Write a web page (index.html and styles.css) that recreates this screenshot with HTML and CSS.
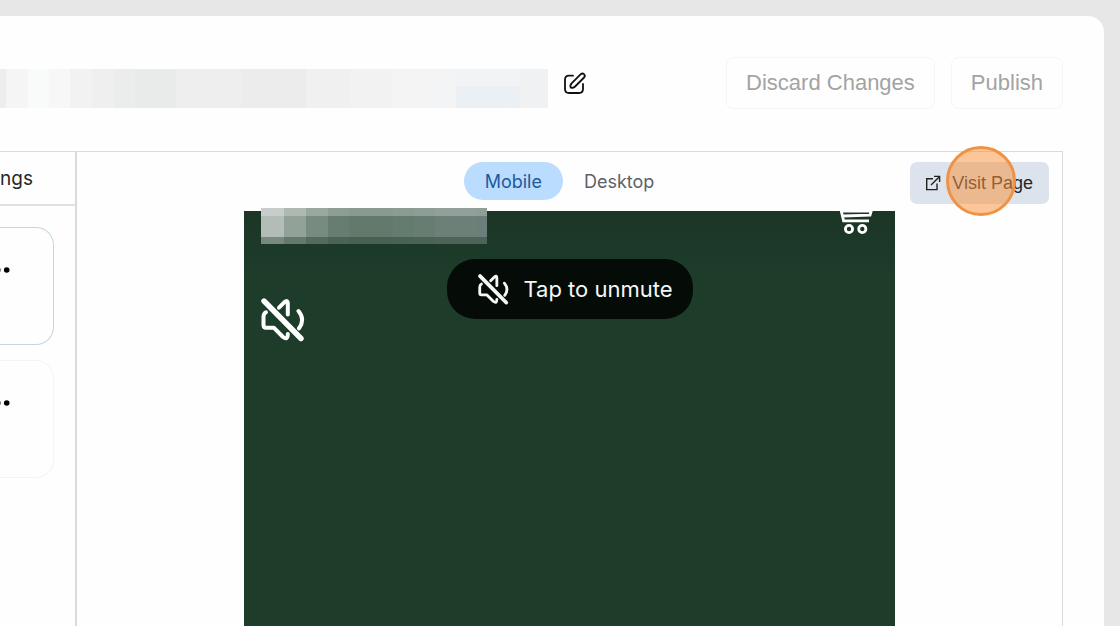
FILE: index.html
```html
<!DOCTYPE html>
<html lang="en">
<head>
  <meta charset="UTF-8">
  <meta name="viewport" content="width=device-width, initial-scale=1.0">
  <title>Page Editor</title>
  <link rel="stylesheet" href="styles.css">
</head>
<body>
  <svg width="0" height="0" class="sprite" aria-hidden="true">
    <symbol id="muted" viewBox="0 0 44 44">
      <g fill="none" stroke="currentColor" stroke-width="4" stroke-linecap="round" stroke-linejoin="round">
        <path d="M5 14.3Q2.5 15.5 2.5 18.7V27Q2.5 29.7 5 29.7H12.8L22 39Q26.8 42.5 26.8 36"/>
        <path d="M18 9.7L23 4.6Q26.8 1.2 26.8 5.5V16.5"/>
        <path d="M37.5 13Q44.5 21.5 38 30.3"/>
        <path d="M3 3L40 40.5" stroke-width="5.4"/>
      </g>
    </symbol>
  </svg>

  <main class="page">
    <header class="header">
      <div class="page-name"></div>
      <button class="icon-btn" aria-label="Edit name">
        <svg width="24" height="24" viewBox="0 0 24 24" fill="none" stroke="#111" stroke-width="1.8" stroke-linecap="round" stroke-linejoin="round">
          <path d="M10 4.7H6Q2 4.7 2 8.7V18Q2 22 6 22H16Q20 22 20 18V13"/>
          <path d="M7.8 16.5Q6.6 14.4 8.8 12.2L17.8 3.2Q19.4 1.8 21 3.1Q22.6 4.8 21.1 6.5L12.1 15.5Q9.8 17.6 7.8 16.5Z"/>
        </svg>
      </button>
      <div class="actions">
        <button class="btn">Discard Changes</button>
        <button class="btn">Publish</button>
      </div>
    </header>

    <div class="workspace">
      <aside class="sidebar">
        <h2>ngs</h2>
        <div class="item active">
          <button class="icon-btn" aria-label="More options">
            <svg width="10" height="6" viewBox="0 0 10 6"><circle cx="-1.2" cy="3" r="2.2" fill="#777"/><circle cx="6.7" cy="3" r="2.8"/></svg>
          </button>
        </div>
        <div class="item">
          <button class="icon-btn" aria-label="More options">
            <svg width="10" height="6" viewBox="0 0 10 6"><circle cx="-1.2" cy="3" r="2.2" fill="#777"/><circle cx="6.7" cy="3" r="2.8"/></svg>
          </button>
        </div>
      </aside>

      <section class="preview">
        <div class="toolbar">
          <div class="tabs">
            <button class="tab selected">Mobile</button>
            <button class="tab">Desktop</button>
          </div>
          <a class="visit" href="#">
            <svg width="16" height="16" viewBox="0 0 16 16" fill="none" stroke="#222" stroke-width="1.4">
              <path d="M8 3.7H1.7V14.6H12V8.5M9 1.4H14.6V7M14.6 1.4L6 10"/>
            </svg>
            Visit Page
            <span class="click"></span>
          </a>
        </div>

        <div class="screen">
          <div class="screen-top">
            <div class="brand"></div>
            <button class="icon-btn cart" aria-label="Cart">
              <svg width="36" height="24" viewBox="0 0 36 24" fill="none" stroke="#fff" stroke-width="2.8">
                <path d="M2 -1L4.6 9.8H30M3.4 5L31 4.2L32.6 -1M2 0H33"/>
                <circle cx="10" cy="18" r="3.6"/>
                <circle cx="23.3" cy="18" r="3.6"/>
              </svg>
            </button>
          </div>
          <button class="icon-btn mute" aria-label="Muted"><svg width="44" height="44"><use href="#muted"/></svg></button>
          <button class="unmute"><svg width="31" height="31"><use href="#muted"/></svg>Tap to unmute</button>
        </div>
      </section>
    </div>
  </main>
</body>
</html>
```
FILE: styles.css
```css
* {
  box-sizing: border-box;
  margin: 0;
  padding: 0;
}

body {
  background: #e7e7e7;
  height: 100vh;
  padding: 16px 16px 0 0;
  overflow: hidden;
  font-family: Inter, "Liberation Sans", sans-serif;
}

button {
  font-family: inherit;
  border: none;
  background: none;
  cursor: pointer;
}

svg {
  display: block;
}

.sprite {
  position: absolute;
}

.page {
  height: 100%;
  background: #fefefe;
  border-top-right-radius: 16px;
  display: flex;
  flex-direction: column;
}

.header {
  display: flex;
  align-items: center;
  padding: 41px 41px 42px 0;
}

/* pixelated page name */
.page-name {
  width: 548px;
  height: 39px;
  margin: 10px 15px 0 0;
  background:
    linear-gradient(to right, transparent 456px, rgba(230, 237, 243, 0.5) 456px 520px, transparent 520px) bottom / 100% 22px no-repeat,
    linear-gradient(to right, #ededed 6px, #f5f5f5 6px 28px, #f9fafa 28px 49px, #f7f7f7 49px 70px, #f2f2f2 70px 92px, #efefef 92px 114px, #ebecec 114px 135px, #e9ebea 135px 176px, #eeeeee 176px 242px, #ececec 242px 306px, #f0f0f0 306px 350px, #f2f2f2 350px 392px, #f4f4f4 392px 434px, #f3f4f5 434px 456px, #f1f3f5 456px 520px, #f0f1f3 520px);
}

.icon-btn {
  display: block;
  color: #fff;
}

.actions {
  display: flex;
  gap: 16px;
  margin-left: auto;
}

.btn {
  height: 52px;
  padding: 0 19px;
  border: 1px solid #f5f5f5;
  border-radius: 8px;
  color: #a3a3a3;
  font-family: "Liberation Sans", sans-serif;
  font-size: 22px;
}

.workspace {
  flex: 1;
  display: flex;
  min-height: 0;
  margin-right: 41px;
  border-top: 1px solid #d9dadb;
  border-right: 1px solid #d9dadb;
}

.sidebar {
  width: 77px;
  border-right: 2px solid #d9dadb;
}

.sidebar h2 {
  height: 54px;
  border-bottom: 2px solid #dde2e5;
  color: #25282c;
  font-size: 19px;
  font-weight: 400;
  line-height: 54px;
}

.item {
  height: 118px;
  margin: 0 21px 15px 0;
  padding-top: 39px;
  border: 1px solid #f4f4f4;
  border-left: none;
  border-radius: 0 18px 18px 0;
}

.item.active {
  margin-top: 21px;
  border-color: #c0d8e1;
}

.preview {
  flex: 1;
  display: flex;
  flex-direction: column;
}

.toolbar {
  display: grid;
  grid-template-columns: 1fr auto 1fr;
  align-items: start;
  padding: 10px 13px 7px;
}

.tabs {
  grid-column: 2;
  display: flex;
}

.tab {
  height: 38px;
  padding: 0 21px;
  border-radius: 19px;
  color: #5d6167;
  font-size: 18px;
}

.tab.selected {
  background: #badcff;
  color: #205a9c;
}

.visit {
  position: relative;
  justify-self: end;
  display: flex;
  align-items: center;
  gap: 11px;
  height: 42px;
  padding: 0 16px 0 15px;
  border-radius: 7px;
  background: #dce3ed;
  color: #22262c;
  font-family: "Liberation Sans", sans-serif;
  font-size: 18px;
  text-decoration: none;
}

/* click marker */
.click {
  position: absolute;
  top: -16px;
  left: 36px;
  width: 70px;
  height: 70px;
  border: 3px solid #f09244;
  border-radius: 50%;
  background: rgba(250, 146, 60, 0.52);
}

.screen {
  position: relative;
  flex: 1;
  width: 66%;
  margin: 0 auto;
  padding: 0 20px 0 17px;
  background: linear-gradient(#1c3526, #1d3c2a 60px);
}

.screen-top {
  display: flex;
  justify-content: space-between;
}

/* pixelated brand name */
.brand {
  width: 226px;
  height: 36px;
  margin-top: -3px;
  background:
    linear-gradient(rgba(255, 255, 255, 0.25) 8px, transparent 8px 29px, rgba(29, 60, 42, 0.4) 29px),
    linear-gradient(to right, #b4bcb8 23px, #93a299 23px 45px, #778b80 45px 67px, #677d71 67px 88px, #62796c 88px 132px, #647b6f 132px 153px, #677d72 153px 174px, #6c8078 174px 216px, #6b7e79 216px);
}

.cart {
  align-self: flex-start;
}

.mute {
  margin-top: 54px;
}

.unmute {
  position: absolute;
  top: 48px;
  left: 50%;
  transform: translateX(-50%);
  display: flex;
  align-items: center;
  gap: 15px;
  height: 60px;
  padding: 0 20px 0 31px;
  border-radius: 28px;
  background: #050c08;
  color: #f5f7f6;
  font-size: 22px;
  white-space: nowrap;
}
```
